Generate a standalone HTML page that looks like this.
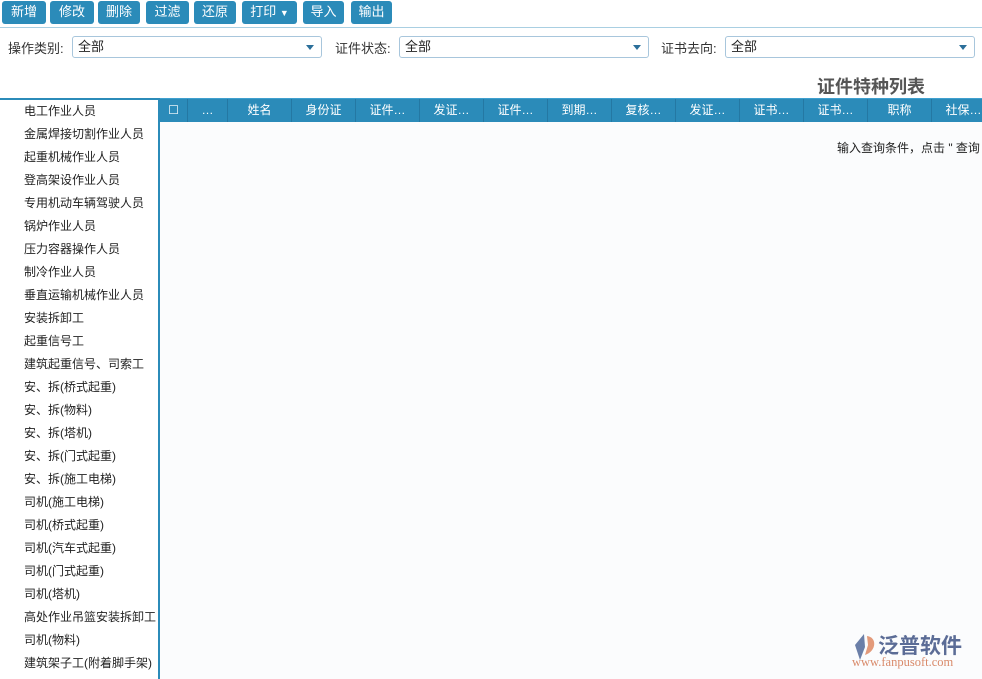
<!DOCTYPE html>
<html><head><meta charset="utf-8"><style>
*{margin:0;padding:0;box-sizing:border-box}
body{width:982px;height:679px;overflow:hidden;background:#fff;font-family:"Liberation Sans","Noto Sans CJK SC",sans-serif;font-size:12px;color:#222;position:relative}
.btn{position:absolute;top:1px;height:23px;background:#2b8bb9;color:#fff;border-radius:3px;font-size:13px;text-align:center;line-height:22px}
.tb{position:absolute;top:27px;left:0;width:982px;height:1px;background:#a9cfe2}
.lbl{position:absolute;top:38px;font-size:13px;color:#333}
.sel{position:absolute;top:36px;height:22px;border:1px solid #a8c6dc;border-radius:3px;background:#fff;font-size:13px;line-height:20px;padding-left:5px}
.sel:after{content:"";position:absolute;right:7px;top:8px;border-left:4px solid transparent;border-right:4px solid transparent;border-top:5px solid #2b6f9a}
.title{position:absolute;left:817px;top:73px;font-size:18px;font-weight:bold;color:#555}
.left{position:absolute;left:0;top:98px;width:160px;height:581px;border-top:2px solid #2b8bb9;border-right:2px solid #2b8bb9;background:#fff}
.left div{height:23px;line-height:23px;padding-left:24px;font-size:12px;white-space:nowrap;color:#222}
.hdr{position:absolute;left:160px;top:98px;width:822px;height:24px;background:#2b8bb9;border-top:1px solid #3fa0cf}
.hdr span{position:absolute;top:0;height:23px;line-height:23px;color:#fff;text-align:center;font-size:12px;border-right:1px solid #2478a3;overflow:hidden;white-space:nowrap}
.main{position:absolute;left:160px;top:122px;width:822px;height:557px;background:#fbfcfd}
</style></head><body>
<div class="btn" style="left:2px;width:44px">新增</div>
<div class="btn" style="left:50px;width:44px">修改</div>
<div class="btn" style="left:98px;width:42px">删除</div>
<div class="btn" style="left:146px;width:43px">过滤</div>
<div class="btn" style="left:194px;width:42px">还原</div>
<div class="btn" style="left:242px;width:55px">打印 <span style="font-size:9px">▼</span></div>
<div class="btn" style="left:303px;width:41px">导入</div>
<div class="btn" style="left:351px;width:41px">输出</div>
<div class="tb"></div>
<div class="lbl" style="left:8px">操作类别:</div>
<div class="sel" style="left:72px;width:250px">全部</div>
<div class="lbl" style="left:335px">证件状态:</div>
<div class="sel" style="left:399px;width:250px">全部</div>
<div class="lbl" style="left:661px">证书去向:</div>
<div class="sel" style="left:725px;width:250px">全部</div>
<div class="title">证件特种列表</div>
<div class="left">
<div>电工作业人员</div><div>金属焊接切割作业人员</div><div>起重机械作业人员</div><div>登高架设作业人员</div><div>专用机动车辆驾驶人员</div><div>锅炉作业人员</div><div>压力容器操作人员</div><div>制冷作业人员</div><div>垂直运输机械作业人员</div><div>安装拆卸工</div><div>起重信号工</div><div>建筑起重信号、司索工</div><div>安、拆(桥式起重)</div><div>安、拆(物料)</div><div>安、拆(塔机)</div><div>安、拆(门式起重)</div><div>安、拆(施工电梯)</div><div>司机(施工电梯)</div><div>司机(桥式起重)</div><div>司机(汽车式起重)</div><div>司机(门式起重)</div><div>司机(塔机)</div><div>高处作业吊篮安装拆卸工</div><div>司机(物料)</div><div>建筑架子工(附着脚手架)</div>
</div>
<div class="hdr">
<span style="left:0;width:28px">☐</span>
<span style="left:28px;width:40px">…</span>
<span style="left:68px;width:64px">姓名</span>
<span style="left:132px;width:64px">身份证</span>
<span style="left:196px;width:64px">证件…</span>
<span style="left:260px;width:64px">发证…</span>
<span style="left:324px;width:64px">证件…</span>
<span style="left:388px;width:64px">到期…</span>
<span style="left:452px;width:64px">复核…</span>
<span style="left:516px;width:64px">发证…</span>
<span style="left:580px;width:64px">证书…</span>
<span style="left:644px;width:64px">证书…</span>
<span style="left:708px;width:64px">职称</span>
<span style="left:772px;width:64px">社保…</span>
</div>
<div class="main">
<div style="position:absolute;left:677px;top:17px;font-size:12px;white-space:nowrap">输入查询条件，点击 " 查询</div>
</div>
<div style="position:absolute;left:850px;top:630px;width:130px;height:40px">
<svg width="26" height="28" viewBox="0 0 26 28" style="position:absolute;left:2px;top:3px"><path d="M12 1 L3 12 L8 27 L13 14Z" fill="#6b7fa8"/><path d="M15 3 C25 4 25 18 13 22 L16 12Z" fill="#e39a7a"/></svg>
<div style="position:absolute;left:28px;top:0;font-size:21px;font-weight:bold;color:#5b6c96;letter-spacing:0px;white-space:nowrap">泛普软件</div>
<div style="position:absolute;left:2px;top:25px;font-family:'Liberation Serif',serif;font-size:12.5px;color:#d98a6a;white-space:nowrap">www.fanpusoft.com</div>
</div>
</body></html>
